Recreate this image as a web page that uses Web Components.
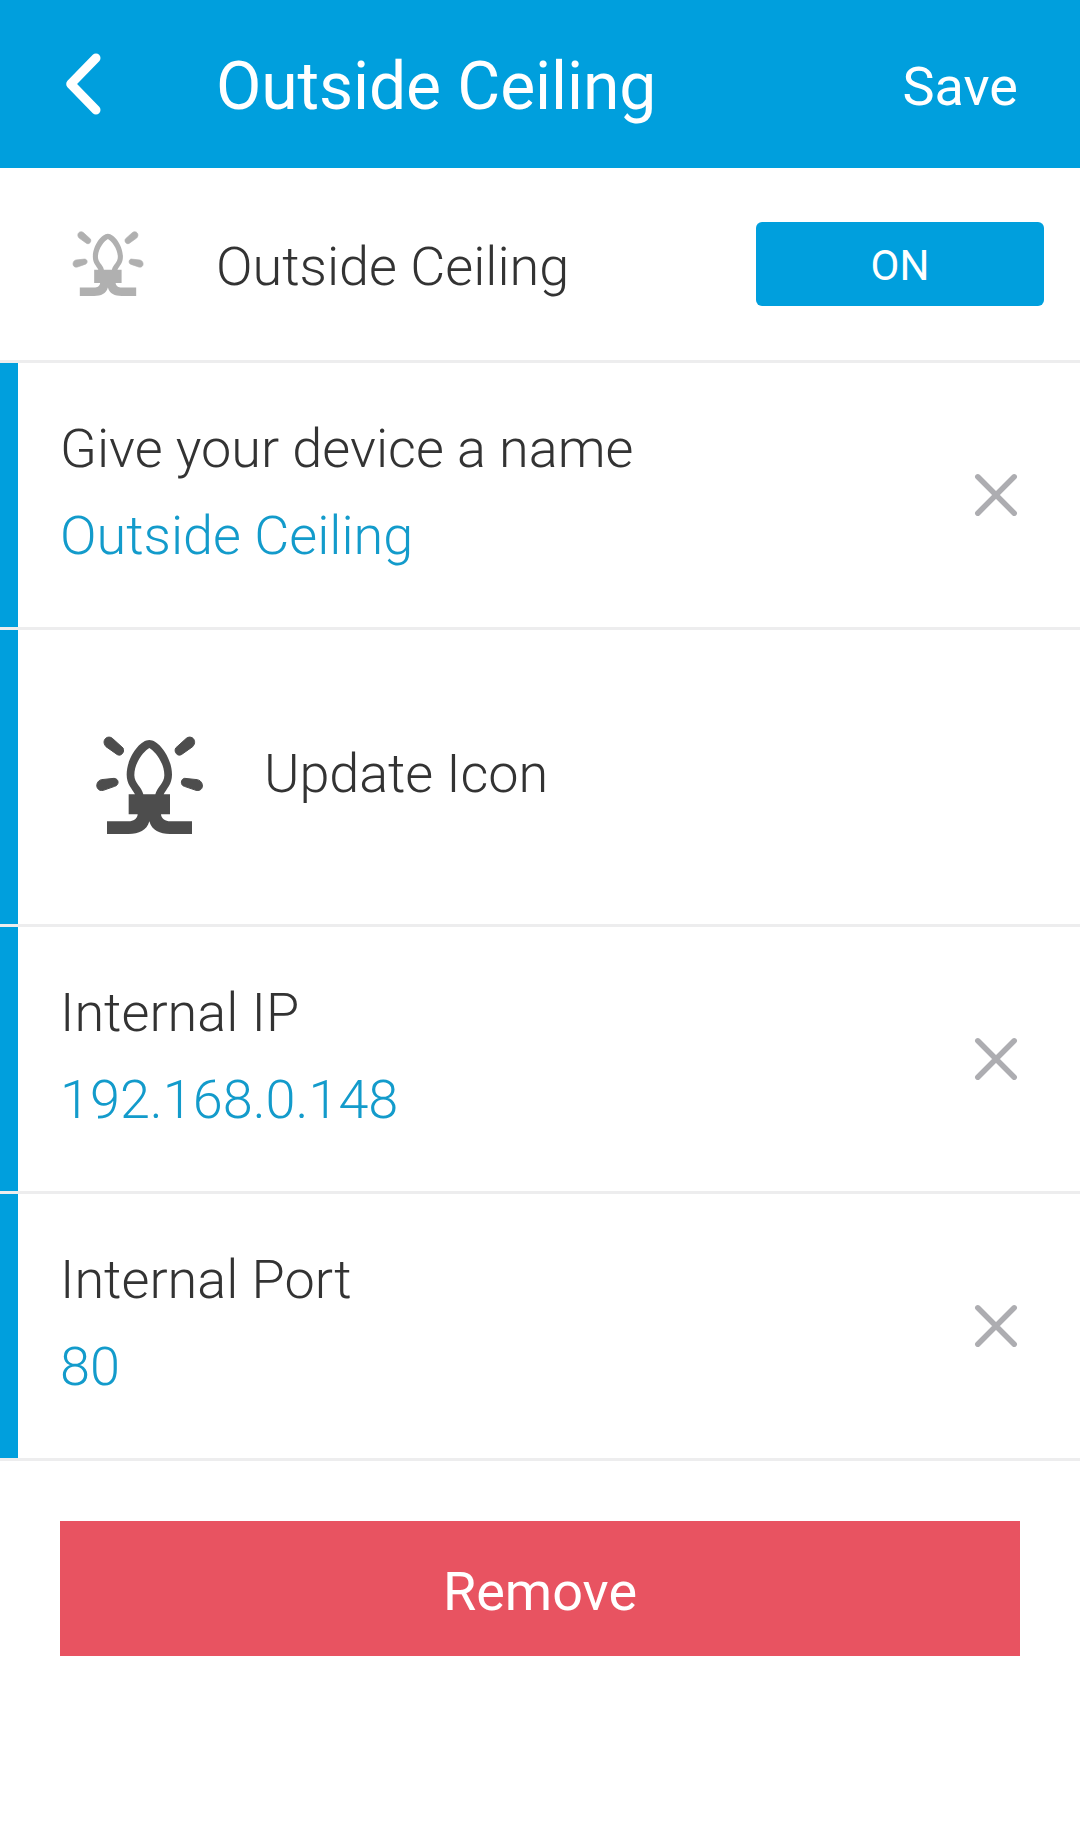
<!DOCTYPE html>
<html lang="en">
<head>
<meta charset="utf-8">
<title>Outside Ceiling</title>
<style>
  html, body { margin: 0; background: #fff; }
  body { font-family: Roboto, "Liberation Sans", sans-serif; color: #333; }
</style>
</head>
<body>
<device-screen></device-screen>
<script>
  const define = (name, html) => customElements.define(name, class extends HTMLElement {
    constructor() {
      super();
      this.attachShadow({ mode: 'open' }).innerHTML = html;
    }
  });

  define('bulb-icon', `
    <style>
      :host { display: block; flex: none; width: 108px; height: 98px; color: #4d4d4d; }
      svg { display: block; width: 100%; height: 100%; overflow: visible; }
    </style>
    <svg viewBox="0 0 324 294" fill="currentColor">
      <path fill-rule="evenodd" d="M123 175C114 157 98 145 98 116C98 66 137 12 166 12C195 12 234 66 234 116C234 145 218 157 209 175H228V235H201C202 249 215 256 228 256H294V294H228C197 294 174 284 166 256C158 284 135 294 104 294H39V256H104C118 256 130 249 131 235H104V175ZM148 175H184C190 153 211 141 211 118C211 79 182 45 166 36C150 45 121 79 121 118C121 141 143 153 148 175Z"/>
      <g stroke="currentColor" stroke-width="3">
        <path d="M55 7L87 36C93 48 82 62 70 56L36 32C20 14 40-5 55 7Z"/>
        <path d="M277 7L245 36C239 48 250 62 262 56L296 32C312 14 292-5 277 7Z"/>
        <path d="M22 131L60 127C76 128 76 148 62 151L28 163C4 168 2 136 22 131Z"/>
        <path d="M310 131L272 127C260 128 258 148 271 151L306 163C330 168 332 136 310 131Z"/>
      </g>
    </svg>`);

  define('clear-icon', `
    <style>:host, svg { display: block; width: 48px; height: 48px; }</style>
    <svg viewBox="0 0 48 48" fill="none" stroke="#adadb1" stroke-width="5.5" stroke-linecap="round">
      <path d="M5.800 5.800L42.200 42.200M42.200 5.800L5.800 42.200"/>
    </svg>`);

  define('app-bar', `
    <style>
      :host { display: flex; align-items: center; box-sizing: border-box; height: 168px; padding: 0 62px 0 60px; background: #009fdd; color: #fff; }
      svg { width: 48px; height: 72px; flex: none; }
      h1 { flex: 1; margin: 6px 0 0 108px; font-size: 66px; font-weight: 400; line-height: 80px; letter-spacing: -0.1px; }
      span { margin-top: 5px; font-size: 54px; line-height: 64px; }
    </style>
    <svg viewBox="0 0 48 72" fill="none" stroke="#fff" stroke-width="9" stroke-linecap="round" stroke-linejoin="round"><path d="M36 10L10.700 36L36 62"/></svg>
    <h1><slot></slot></h1>
    <span><slot name="action"></slot></span>`);

  define('device-status', `
    <style>
      :host { display: flex; align-items: center; box-sizing: border-box; height: 195px; padding: 0 36px 0 71px; border-bottom: 3px solid #ededee; }
      bulb-icon { width: 72px; height: 65px; margin-top: -1px; color: #b0b0b0; }
      p { flex: 1; margin: 6px 0 0 73px; font-size: 54px; font-weight: 300; line-height: 64px; }
      .toggle { display: flex; align-items: center; justify-content: center; box-sizing: border-box; width: 288px; height: 84px; padding-top: 4px; border-radius: 6px; background: #009fdd; color: #fff; font-size: 42px; line-height: 50px; }
    </style>
    <bulb-icon></bulb-icon>
    <p><slot></slot></p>
    <div class="toggle"><slot name="state"></slot></div>`);

  define('setting-row', `
    <style>
      :host { display: flex; height: var(--row-height, 264px); border-bottom: 3px solid #ededee; }
      .bar { width: 18px; flex: none; background: #009fdd; }
      .body { flex: 1; display: flex; align-items: center; }
    </style>
    <div class="bar"></div>
    <div class="body"><slot></slot></div>`);

  define('text-field', `
    <style>
      :host { flex: 1; display: flex; align-items: center; padding: 0 60px 0 42px; font-size: 54px; font-weight: 300; line-height: 87px; }
      .text { flex: 1; margin-bottom: 6px; }
      .value { color: #139bcb; }
    </style>
    <div class="text">
      <div><slot name="label"></slot></div>
      <div class="value"><slot></slot></div>
    </div>
    <clear-icon></clear-icon>`);

  define('icon-field', `
    <style>
      :host { display: flex; align-items: center; padding: 10px 0 0 76px; font-size: 54px; font-weight: 300; line-height: 64px; letter-spacing: -0.1px; }
      bulb-icon { margin-top: 5px; }
      p { margin: -17px 0 0 62px; }
    </style>
    <bulb-icon></bulb-icon>
    <p><slot></slot></p>`);

  define('remove-button', `
    <style>
      :host { display: flex; align-items: center; justify-content: center; box-sizing: border-box; height: 135px; margin: 60px 60px 0; padding-top: 6px; background: #e85361; color: #fff; font-size: 54px; line-height: 64px; }
    </style>
    <slot></slot>`);

  define('device-screen', `
    <style>
      :host { display: flex; flex-direction: column; height: 1848px; overflow: hidden; background: #fff; }
      .icon-row { --row-height: 294px; }
    </style>
    <app-bar>Outside Ceiling<span slot="action">Save</span></app-bar>
    <device-status>Outside Ceiling<span slot="state">ON</span></device-status>
    <setting-row><text-field><span slot="label">Give your device a name</span>Outside Ceiling</text-field></setting-row>
    <setting-row class="icon-row"><icon-field>Update Icon</icon-field></setting-row>
    <setting-row><text-field><span slot="label">Internal IP</span>192.168.0.148</text-field></setting-row>
    <setting-row><text-field><span slot="label">Internal Port</span>80</text-field></setting-row>
    <remove-button>Remove</remove-button>`);
</script>
</body>
</html>
